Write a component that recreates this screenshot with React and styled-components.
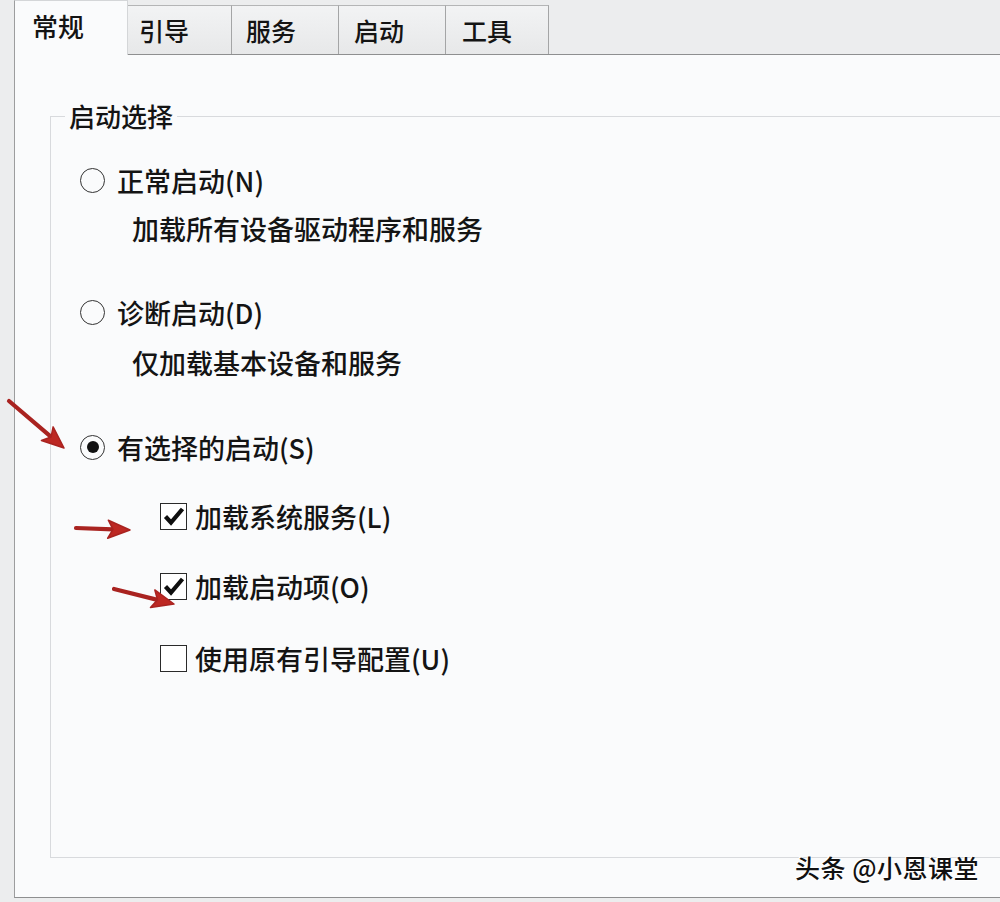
import React from "react";
import styled, { createGlobalStyle } from "styled-components";

const GlobalStyle = createGlobalStyle`
  html, body {
    margin: 0;
    padding: 0;
  }
  body {
    background: #ecedee;
    overflow: hidden;
    font-family: "Noto Sans CJK SC", "Noto Sans", sans-serif;
    color: #141414;
  }
`;

const Window = styled.div`
  position: relative;
  width: 1000px;
  height: 902px;
  padding-left: 14px;
  box-sizing: border-box;
  overflow: hidden;
  background: #ecedee;
`;

const TabStrip = styled.div`
  position: relative;
  z-index: 1;
  display: flex;
  align-items: flex-end;
  height: 54px;
`;

const Tab = styled.div`
  box-sizing: border-box;
  width: ${(p) => p.$w}px;
  display: flex;
  align-items: center;
  padding-left: ${(p) => p.$pad}px;
  font-size: ${(p) => (p.$active ? 26 : 25)}px;
  font-weight: 500;
  line-height: 1;
  white-space: nowrap;
  ${(p) =>
    p.$active
      ? `
    height: 55px;
    margin-bottom: -1px;
    padding-bottom: 5px;
    background: #fafbfc;
    border: 1px solid #d4d6d8;
    border-bottom: none;
    border-left-color: #9c9d9e;
  `
      : `
    height: 49px;
    padding-top: 1px;
    background: linear-gradient(#f2f3f4, #e7e8e9);
    border-top: 1px solid #b4b5b6;
    border-right: 1px solid #a4a5a6;
  `}
`;

const Panel = styled.div`
  box-sizing: border-box;
  width: 1100px;
  height: 844px;
  background: #fafbfc;
  border-top: 1px solid #8e8f90;
  border-left: 1px solid #9c9d9e;
  border-bottom: 1px solid #8e8f90;
`;

const Group = styled.fieldset`
  box-sizing: border-box;
  margin: 46px 0 0 35px;
  height: 757px;
  padding: 0;
  min-inline-size: 0;
  border: 1px solid #d8dadd;
  border-right: none;
  display: flex;
  flex-direction: column;
`;

const Legend = styled.legend`
  margin-left: 14px;
  padding: 0 4px;
  font-size: 26px;
  font-weight: 500;
  line-height: 30px;
`;

const Options = styled.div`
  display: flex;
  flex-direction: column;
  padding-top: 34px;
  font-size: 27px;
  font-weight: 500;
`;

const Row = styled.div`
  display: flex;
  align-items: center;
  height: 30px;
  margin-top: ${(p) => p.$mt || 0}px;
  margin-left: ${(p) => p.$ml}px;
  gap: ${(p) => p.$gap || 0}px;
  white-space: nowrap;
  line-height: 1;
`;

const Radio = styled.span`
  box-sizing: border-box;
  width: 25px;
  height: 25px;
  border-radius: 50%;
  border: 1.8px solid #333;
  display: flex;
  align-items: center;
  justify-content: center;
  flex: none;
  &::after {
    content: "";
    display: ${(p) => (p.$checked ? "block" : "none")};
    width: 12px;
    height: 12px;
    border-radius: 50%;
    background: #111;
  }
`;

const Box = styled.span`
  box-sizing: border-box;
  width: 27px;
  height: 27px;
  border: 1.8px solid #2a2a2a;
  display: flex;
  align-items: center;
  justify-content: center;
  flex: none;
  background: #fff;
`;

const Watermark = styled.div`
  position: absolute;
  left: 795px;
  top: 852px;
  font-size: 25px;
  font-weight: 500;
  line-height: 30px;
  letter-spacing: 0.5px;
  color: #111;
  text-shadow: 1px 1px 0 #fff, -1px -1px 0 #fff;
  white-space: nowrap;
`;

const Arrows = styled.svg`
  position: absolute;
  left: 0;
  top: 0;
  pointer-events: none;
  z-index: 2;
`;

const Check = () => (
  <svg width="22" height="20" viewBox="0 0 22 20">
    <path
      d="M2.5 10.5 L8 16.5 L19.5 3"
      fill="none"
      stroke="#0e0e0e"
      strokeWidth="4.2"
      strokeLinejoin="miter"
    />
  </svg>
);

const RedArrow = ({ x1, y1, x2, y2 }) => {
  const dx = x2 - x1;
  const dy = y2 - y1;
  const len = Math.hypot(dx, dy);
  const ux = dx / len;
  const uy = dy / len;
  const hl = 22;
  const hw = 9;
  const bx = x2 - ux * hl;
  const by = y2 - uy * hl;
  const head = `${x2},${y2} ${bx - uy * hw},${by + ux * hw} ${bx + ux * 5},${by + uy * 5} ${bx + uy * hw},${by - ux * hw}`;
  return (
    <g fill="#bd2823" stroke="#a92320">
      <line x1={x1} y1={y1} x2={bx + ux * 5} y2={by + uy * 5} strokeWidth="4.2" strokeLinecap="round" />
      <polygon points={head} strokeWidth="1.5" strokeLinejoin="round" />
    </g>
  );
};

const tabs = [
  { label: "常规", w: 114, pad: 17, active: true },
  { label: "引导", w: 104, pad: 11 },
  { label: "服务", w: 107, pad: 14 },
  { label: "启动", w: 107, pad: 15 },
  { label: "工具", w: 103, pad: 16 },
];

export default function App() {
  return (
    <>
      <GlobalStyle />
      <Window>
        <TabStrip>
          {tabs.map((t) => (
            <Tab key={t.label} $w={t.w} $pad={t.pad} $active={t.active}>
              {t.label}
            </Tab>
          ))}
        </TabStrip>
        <Panel>
          <Group>
            <Legend>启动选择</Legend>
            <Options>
              <Row $ml={29} $gap={12}>
                <Radio />
                正常启动(N)
              </Row>
              <Row $ml={81} $mt={18}>
                加载所有设备驱动程序和服务
              </Row>
              <Row $ml={29} $gap={12} $mt={54}>
                <Radio />
                诊断启动(D)
              </Row>
              <Row $ml={81} $mt={20}>
                仅加载基本设备和服务
              </Row>
              <Row $ml={29} $gap={12} $mt={55}>
                <Radio $checked />
                有选择的启动(S)
              </Row>
              <Row $ml={109} $gap={8} $mt={39}>
                <Box>
                  <Check />
                </Box>
                加载系统服务(L)
              </Row>
              <Row $ml={109} $gap={8} $mt={40}>
                <Box>
                  <Check />
                </Box>
                加载启动项(O)
              </Row>
              <Row $ml={109} $gap={8} $mt={42}>
                <Box />
                使用原有引导配置(U)
              </Row>
            </Options>
          </Group>
        </Panel>
        <Watermark>头条 @小恩课堂</Watermark>
        <Arrows width="1000" height="902">
          <RedArrow x1={9} y1={401} x2={64} y2={448} />
          <RedArrow x1={76} y1={528} x2={130} y2={530} />
          <RedArrow x1={114} y1={589} x2={174} y2={604} />
        </Arrows>
      </Window>
    </>
  );
}
